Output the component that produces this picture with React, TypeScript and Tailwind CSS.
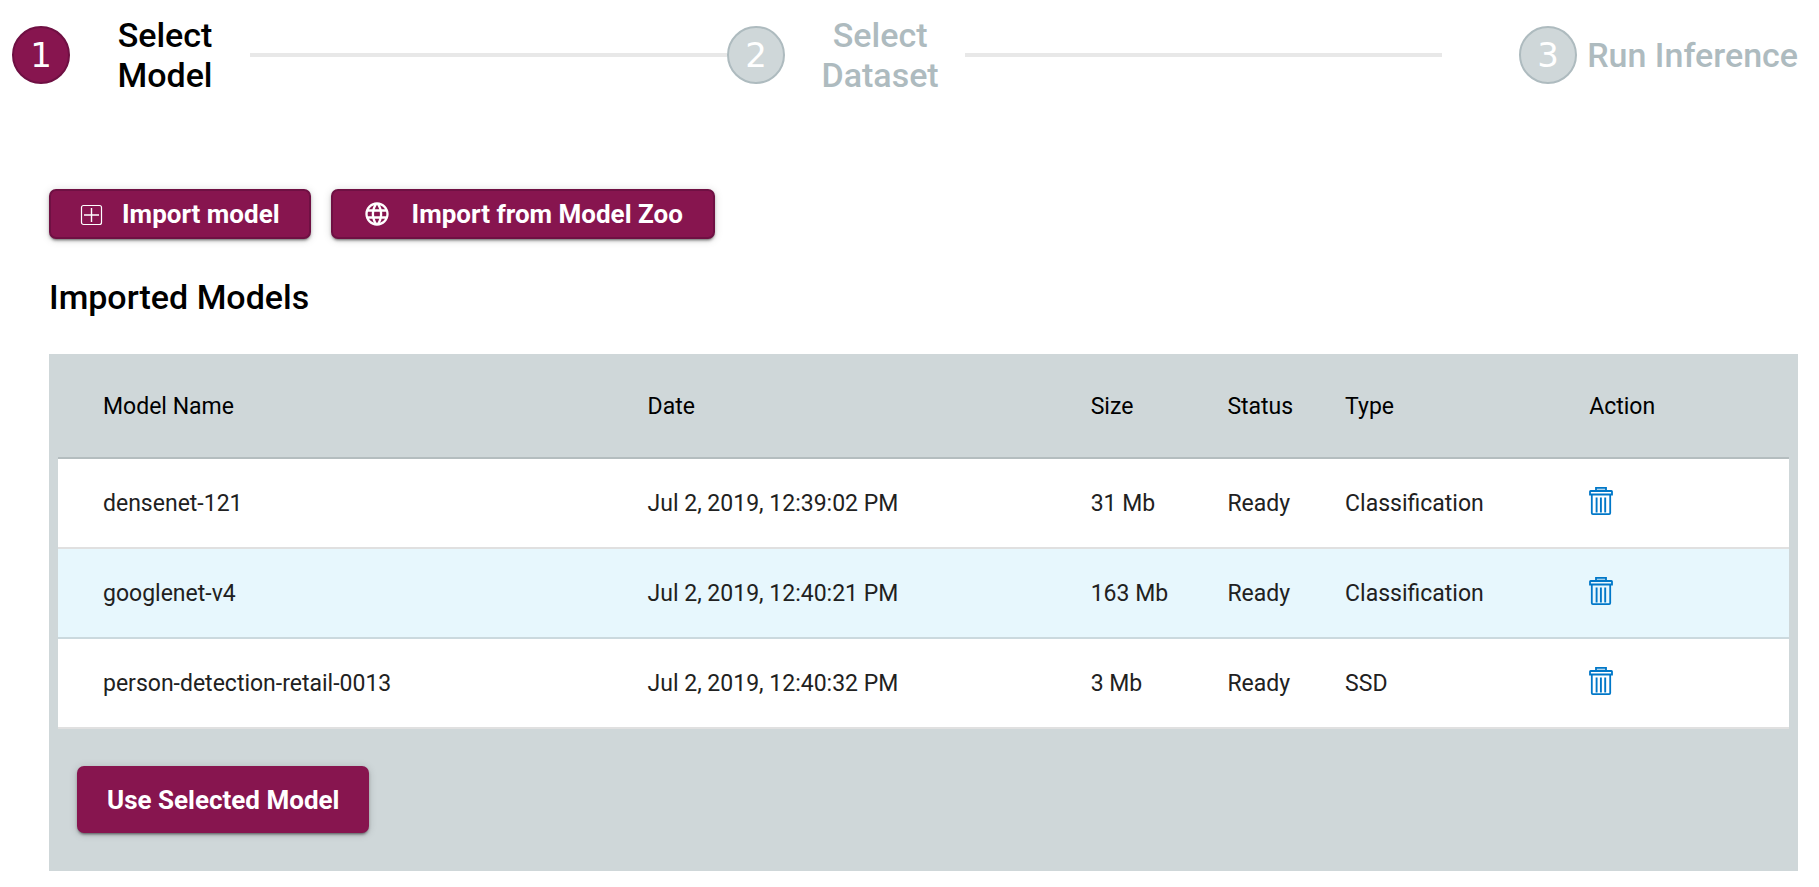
import { useState } from "react";
import { MdLanguage } from "react-icons/md";

const steps = ["Select Model", "Select Dataset", "Run Inference"];

const models = [
  { name: "densenet-121", date: "Jul 2, 2019, 12:39:02 PM", size: "31 Mb", status: "Ready", type: "Classification" },
  { name: "googlenet-v4", date: "Jul 2, 2019, 12:40:21 PM", size: "163 Mb", status: "Ready", type: "Classification" },
  { name: "person-detection-retail-0013", date: "Jul 2, 2019, 12:40:32 PM", size: "3 Mb", status: "Ready", type: "SSD" },
];

const buttonBase =
  "flex items-center rounded-[7px] bg-[#87154f] text-[26px] leading-8 font-bold text-white whitespace-nowrap shadow-[0_3px_2px_-2px_rgba(0,0,0,0.3),0_2px_3px_rgba(0,0,0,0.25),0_1px_8px_rgba(0,0,0,0.15)]";

function PlusBoxIcon() {
  return (
    <svg className="mr-[18px] size-6" viewBox="0 0 24 24" fill="none" stroke="currentColor" aria-hidden="true">
      <rect x="1.5" y="3.5" width="20" height="19" rx="2" strokeWidth="1.2" />
      <path d="M11.5 6v14M4 13h15" strokeWidth="1.4" />
    </svg>
  );
}

function TrashIcon() {
  return (
    <svg className="h-[30px] w-6" viewBox="0 0 24 30" fill="none" stroke="currentColor" aria-hidden="true">
      <path d="M7 5V1.9h10V5" strokeWidth="1.8" />
      <path d="M7.8 3.6h8.4" strokeOpacity="0.3" strokeWidth="1.6" />
      <path d="M1 8.5V5.6q0-.6.6-.6h20.8q.6 0 .6.6v2.9z" strokeWidth="1.8" />
      <path d="M2.8 9v18.1q0 1.1 1.1 1.1h16.2q1.1 0 1.1-1.1V9" strokeWidth="1.8" />
      <path d="M7.6 11.4v15M11.9 11.4v15M16.2 11.4v15" strokeWidth="1.9" />
    </svg>
  );
}

function Stepper() {
  return (
    <ol className="flex items-center pt-[15px] pr-[21px] pl-3">
      {steps.map((label, i) => {
        const last = i === steps.length - 1;
        return (
          <li
            key={label}
            aria-current={i === 0 ? "step" : undefined}
            className={`flex items-center ${last ? "flex-none pl-[77px]" : "flex-1"}`}
          >
            <span
              className={`flex size-[58px] shrink-0 items-center justify-center rounded-full border-2 font-['DejaVu_Sans',sans-serif] text-[34px] leading-10 text-white ${
                i === 0 ? "border-[#6f1043] bg-[#87154f]" : "border-[#aebbbf] bg-[#cfd7d9]"
              }`}
            >
              {i + 1}
            </span>
            <span
              className={`ml-[10px] text-center text-[34px] leading-10 font-medium ${
                last ? "whitespace-nowrap" : "w-[170px] shrink-0 px-6"
              } ${i === 0 ? "text-black" : "text-[#aebbbf]"}`}
            >
              {label}
            </span>
            {!last && <span className="h-1 flex-1 bg-[#e8e8e8]" />}
          </li>
        );
      })}
    </ol>
  );
}

export default function App() {
  const [selected, setSelected] = useState("googlenet-v4");

  return (
    <div className="min-h-screen bg-white font-[Roboto,sans-serif] text-black">
      <Stepper />
      <main className="pt-[94px] pr-[21px] pb-4 pl-[49px]">
        <div className="flex gap-5">
          <button type="button" className={`${buttonBase} h-[50px] border-2 border-[#6f1043] px-[29px]`}>
            <PlusBoxIcon />
            Import model
          </button>
          <button type="button" className={`${buttonBase} h-[50px] border-2 border-[#6f1043] px-[30px]`}>
            <MdLanguage className="mr-[21px] size-7" aria-hidden="true" />
            Import from Model Zoo
          </button>
        </div>
        <h1 className="mt-[38px] text-[34px] leading-10 font-medium">Imported Models</h1>
        <section className="mt-[37px] bg-[#cfd7d9] px-[9px] pb-[38px]">
          <table className="w-full table-fixed border-separate border-spacing-0 text-left text-[23px] leading-8 font-[370]">
            <colgroup>
              <col className="w-[34%]" />
              <col className="w-[25.6%]" />
              <col className="w-[7.9%]" />
              <col className="w-[6.8%]" />
              <col className="w-[14.1%]" />
              <col />
            </colgroup>
            <thead>
              <tr className="h-[105px]">
                {["Model Name", "Date", "Size", "Status", "Type", "Action"].map((h) => (
                  <th key={h} className="border-b-2 border-[#b4bdbf] pt-0.5 pl-px font-[370] first:pl-[45px]">
                    {h}
                  </th>
                ))}
              </tr>
            </thead>
            <tbody>
              {models.map((m) => (
                <tr
                  key={m.name}
                  onClick={() => setSelected(m.name)}
                  className={`h-[90px] cursor-pointer text-[#212121] ${m.name === selected ? "bg-[#e7f7fd]" : "bg-white"}`}
                >
                  <td className="border-b-2 border-black/12 pt-0.5 pl-[45px]">{m.name}</td>
                  <td className="border-b-2 border-black/12 pt-0.5 pl-px">{m.date}</td>
                  <td className="border-b-2 border-black/12 pt-0.5 pl-px">{m.size}</td>
                  <td className="border-b-2 border-black/12 pt-0.5 pl-px">{m.status}</td>
                  <td className="border-b-2 border-black/12 pt-0.5 pl-px">{m.type}</td>
                  <td className="border-b-2 border-black/12 pl-px">
                    <button type="button" aria-label={`Delete ${m.name}`} className="mb-1 block text-[#0077c8]">
                      <TrashIcon />
                    </button>
                  </td>
                </tr>
              ))}
            </tbody>
          </table>
          <button type="button" className={`${buttonBase} mt-[37px] ml-[19px] h-[67px] px-[30px]`}>
            Use Selected Model
          </button>
        </section>
      </main>
    </div>
  );
}
